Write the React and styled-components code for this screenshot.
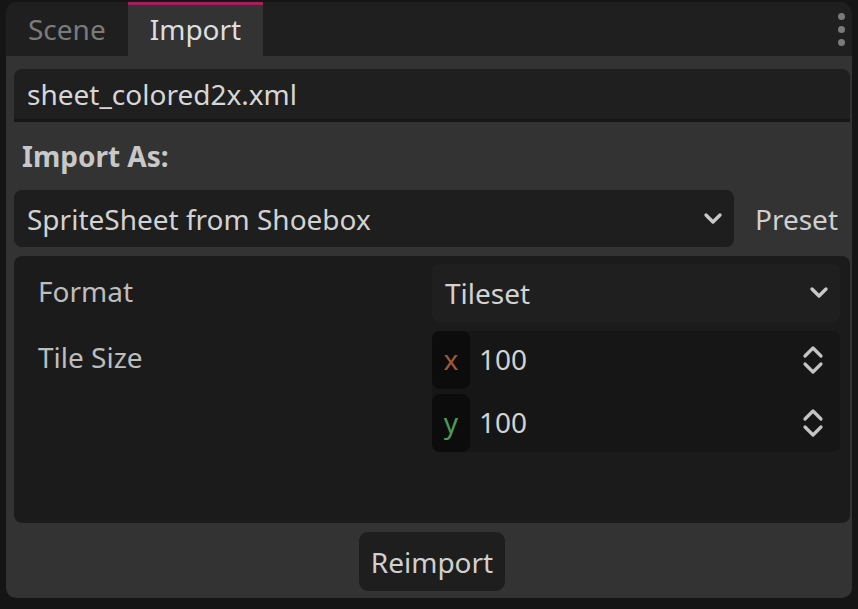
import React from 'react';
import styled, { createGlobalStyle } from 'styled-components';

const Global = createGlobalStyle`
  html, body {
    margin: 0;
    padding: 0;
    background: #151515;
    font-family: "Noto Sans", "Open Sans", sans-serif;
  }
`;

const Dock = styled.div`
  width: 858px;
  height: 609px;
  box-sizing: border-box;
  padding: 2px 6px 11px 6px;
  display: flex;
  flex-direction: column;
`;

const TabBar = styled.div`
  height: 54px;
  flex: none;
  display: flex;
  align-items: stretch;
  background: #1f1f1f;
  border-radius: 10px 12px 0 0;
  position: relative;
`;

const Tab = styled.div`
  display: flex;
  align-items: center;
  padding: 0 22px 4px 22px;
  font-size: 28px;
  color: ${p => (p.$active ? '#dedede' : '#7b7b7b')};
  background: ${p => (p.$active ? '#333333' : 'transparent')};
  border-top: 3px solid ${p => (p.$active ? '#a51f5c' : 'transparent')};
`;

const MenuDots = styled.div`
  position: absolute;
  right: 7px;
  top: 11px;
  display: flex;
  flex-direction: column;
  gap: 6px;
  span {
    width: 7px;
    height: 7px;
    border-radius: 50%;
    background: #7a7a7a;
  }
`;

const Panel = styled.div`
  flex: 1;
  background: #333333;
  border-radius: 0 0 10px 10px;
  padding: 13px 2px 7px 8px;
  display: flex;
  flex-direction: column;
`;

const FileField = styled.div`
  height: 50px;
  background: #1f1f1f;
  border-radius: 8px 8px 0 0;
  border-bottom: 3px solid #161616;
  display: flex;
  align-items: center;
  padding-left: 13px;
  font-size: 28px;
  color: #d6d6d6;
`;

const SectionLabel = styled.div`
  height: 68px;
  display: flex;
  align-items: center;
  padding-left: 8px;
  font-size: 28px;
  font-weight: 700;
  color: #c8c8c8;
`;

const PresetRow = styled.div`
  display: flex;
  align-items: center;
  gap: 21px;
  height: 57px;
`;

const Select = styled.div`
  flex: 1;
  height: ${p => p.$h || '57px'};
  box-sizing: border-box;
  background: ${p => p.$bg || '#1e1e1e'};
  border-radius: 8px;
  display: flex;
  align-items: center;
  justify-content: space-between;
  padding: 0 11px 0 13px;
  font-size: 28px;
  color: #d2d2d2;
`;

const PresetText = styled.div`
  font-size: 28px;
  color: #cfcfcf;
  padding-right: 12px;
`;

const Inspector = styled.div`
  margin-top: 9px;
  height: 267px;
  background: #1b1b1b;
  border-radius: 8px;
  box-sizing: border-box;
  padding: 8px 10px 8px 24px;
  display: grid;
  grid-template-columns: 1fr 408px;
  grid-auto-rows: min-content;
  row-gap: 9px;
`;

const PropLabel = styled.div`
  height: 58px;
  box-sizing: border-box;
  padding-bottom: ${p => p.$lift || '2px'};
  display: flex;
  align-items: center;
  font-size: 28px;
  color: #bdbdbd;
`;

const VectorBox = styled.div`
  background: #161616;
  border-radius: 8px;
  display: flex;
  flex-direction: column;
  gap: 5px;
`;

const VectorRow = styled.div`
  height: 58px;
  display: flex;
  align-items: center;
  font-size: 28px;
  color: #d2d2d2;
  padding-right: 16px;
`;

const Axis = styled.div`
  width: 38px;
  align-self: stretch;
  background: #0c0c0c;
  border-radius: 8px;
  display: flex;
  align-items: center;
  justify-content: center;
  padding-bottom: 3px;
  color: ${p => p.$color};
  margin-right: 9px;
`;

const Value = styled.div`
  flex: 1;
  padding-bottom: 3px;
`;

const Footer = styled.div`
  display: flex;
  justify-content: center;
  margin-top: 9px;
`;

const Button = styled.div`
  height: 59px;
  padding: 0 12px;
  background: #1e1e1e;
  border-radius: 9px;
  display: flex;
  align-items: center;
  font-size: 28px;
  color: #d0d0d0;
`;

const Chevron = () => (
  <svg width="20" height="14" viewBox="0 0 20 14">
    <path d="M3 3 L10 10 L17 3" fill="none" stroke="#c8c8c8" strokeWidth="3.4" strokeLinecap="round" strokeLinejoin="round" />
  </svg>
);

const Spinner = () => (
  <svg width="22" height="30" viewBox="0 0 22 30">
    <path d="M3 11 L11 3 L19 11" fill="none" stroke="#c4c4c4" strokeWidth="3.2" strokeLinecap="round" strokeLinejoin="round" />
    <path d="M3 19 L11 27 L19 19" fill="none" stroke="#c4c4c4" strokeWidth="3.2" strokeLinecap="round" strokeLinejoin="round" />
  </svg>
);

export default function App() {
  return (
    <>
      <Global />
      <Dock>
        <TabBar>
          <Tab>Scene</Tab>
          <Tab $active>Import</Tab>
          <MenuDots><span /><span /><span /></MenuDots>
        </TabBar>
        <Panel>
          <FileField>sheet_colored2x.xml</FileField>
          <SectionLabel>Import As:</SectionLabel>
          <PresetRow>
            <Select>
              SpriteSheet from Shoebox
              <Chevron />
            </Select>
            <PresetText>Preset</PresetText>
          </PresetRow>
          <Inspector>
            <PropLabel $lift="4px">Format</PropLabel>
            <Select $h="58px" $bg="#1f1f1f">
              Tileset
              <Chevron />
            </Select>
            <PropLabel $lift="6px">Tile Size</PropLabel>
            <VectorBox>
              <VectorRow>
                <Axis $color="#a0583a">x</Axis>
                <Value>100</Value>
                <Spinner />
              </VectorRow>
              <VectorRow>
                <Axis $color="#4f9a55">y</Axis>
                <Value>100</Value>
                <Spinner />
              </VectorRow>
            </VectorBox>
          </Inspector>
          <Footer>
            <Button>Reimport</Button>
          </Footer>
        </Panel>
      </Dock>
    </>
  );
}
